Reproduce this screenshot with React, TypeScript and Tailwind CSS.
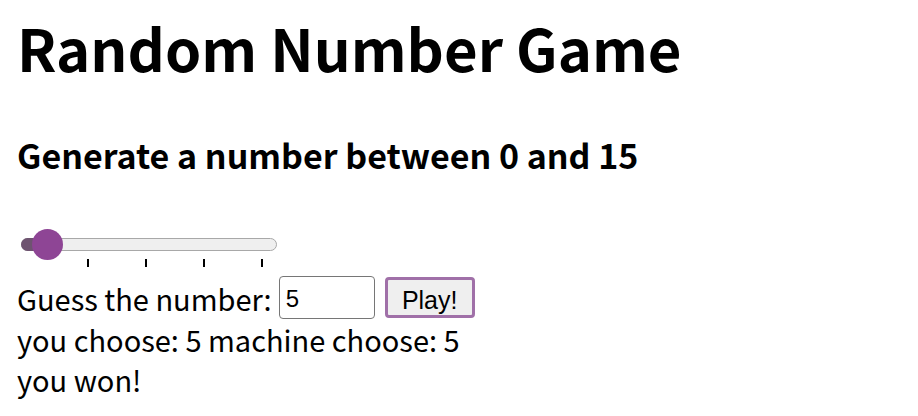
import React, { useState } from 'react';

const ticks = [0, 1, 2, 3];

const Slider: React.FC<{ value: number; max: number }> = ({ value, max }) => {
  const pct = (value / max) * 100;
  return (
    <div className="relative w-[256px] h-[31px] ml-[4px]">
      <div className="absolute left-0 right-0 top-[9px] h-[13px] rounded-full border border-[#a8a8a8] bg-[#efefef]" />
      <div className="absolute left-0 top-[9px] h-[13px] w-[26px] rounded-l-full bg-[#6e5370]" />
      <div
        className="absolute top-0 w-[31px] h-[31px] rounded-full bg-[#8e4595]"
        style={{ left: `calc(${pct}% + 11px)` }}
      />
    </div>
  );
};

export default function App() {
  const [guess] = useState(5);
  const machine = 5;

  return (
    <div className="px-[17px] text-black font-['Noto_Sans_CJK_KR',sans-serif]">
      <h1 className="text-[58px] font-bold leading-[1.2] pt-[13px]">Random Number Game</h1>
      <h2 className="text-[34px] font-bold leading-[1.2] mt-[52px]">Generate a number between 0 and 15</h2>
      <div className="mt-[54px]">
        <Slider value={0} max={15} />
        <div className="flex gap-[56px] ml-[70px] mt-[-1px]">
          {ticks.map(t => (
            <div key={t} className="w-[2px] h-[8px] bg-black" />
          ))}
        </div>
      </div>
      <div className="flex items-center text-[29px] leading-[40px] mt-[9px]">
        <span>Guess the number:</span>
        <input
          type="number"
          defaultValue={guess}
          className="ml-[7px] w-[96px] h-[43px] border border-[#767676] rounded-[4px] px-[6px] pt-[2px] text-[24px] font-['Liberation_Sans',sans-serif] outline-none"
        />
        <button className="ml-[10px] w-[90px] h-[41px] border-[3px] border-[#a070a8] rounded-[4px] bg-[#efefef] text-[25px] font-['Liberation_Sans',sans-serif]">
          Play!
        </button>
      </div>
      <div className="text-[29px] leading-[40px]">
        you choose: {guess} machine choose: {machine}
      </div>
      <div className="text-[29px] leading-[40px]">you won!</div>
    </div>
  );
}
